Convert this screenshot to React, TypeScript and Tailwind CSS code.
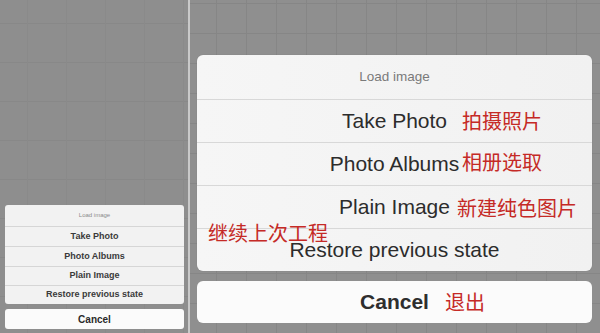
import React from "react";

const font = { fontFamily: '"Liberation Sans", Arial, sans-serif' };
const cjk = { fontFamily: '"Noto Sans CJK SC", "Noto Sans", sans-serif' };

function Note({ className, children }: { className: string; children: React.ReactNode }) {
  return (
    <span className={`absolute text-[20px] leading-[26px] text-[#c52a26] ${className}`} style={cjk}>
      {children}
    </span>
  );
}

export default function App() {
  const leftRows = ["Take Photo", "Photo Albums", "Plain Image", "Restore previous state"];
  const leftHeights = ["h-[20px]", "h-[20px]", "h-[19px]", "h-[19px]"];
  const rightRows = ["Take Photo", "Photo Albums", "Plain Image", "Restore previous state"];
  return (
    <div className="w-[600px] h-[333px] flex overflow-hidden bg-[#8e8e8e]" style={font}>
      {/* Left small screenshot */}
      <div className="w-[188px] h-full flex flex-col justify-end pl-[5px] pr-[4px] pb-[4px] bg-[#8e8e8e] bg-[linear-gradient(to_right,#8a8a8a_1px,transparent_1px),linear-gradient(to_bottom,#888888_1px,transparent_1px)] bg-[size:39px_39px] bg-[position:27px_23px]">
        <div className="rounded-[3px] bg-[#f2f2f2] overflow-hidden">
          <div className="h-[21px] flex items-center justify-center text-[6px] text-[#8a8a8a]">Load image</div>
          {leftRows.map((r, i) => (
            <div
              key={r}
              className={`${leftHeights[i]} border-t border-[#d6d6d6] flex items-center justify-center text-[9px] font-bold text-[#3a3a3a]`}
            >
              {r}
            </div>
          ))}
        </div>
        <div className="mt-[5px] h-[20px] rounded-[3px] bg-[#fbfbfb] flex items-center justify-center text-[10px] font-bold text-[#2a2a2a]">
          Cancel
        </div>
      </div>

      {/* Separator */}
      <div className="w-[2px] h-full bg-[#c9c9c9]" />

      {/* Right zoomed screenshot */}
      <div className="relative flex-1 h-full pl-[7px] pr-[8px] pt-[55px] bg-[#8f8f8f] bg-[linear-gradient(to_right,#868686_1px,transparent_1px),linear-gradient(to_bottom,#868686_1px,transparent_1px)] bg-[size:30px_30px] bg-[position:26px_3px]">
        <div className="rounded-[6px] bg-[linear-gradient(to_right,#f6f6f6,#f1f1f1)] overflow-hidden shadow-[0_0_1px_rgba(0,0,0,0.2)]">
          <div className="h-[44px] flex items-center justify-center text-[13.5px] text-[#7a7a7a]">Load image</div>
          {rightRows.map((r) => (
            <div
              key={r}
              className="h-[43px] border-t border-[#d8d8d8] flex items-center justify-center text-[21px] text-[#2c2c2c]"
            >
              {r}
            </div>
          ))}
        </div>
        <div className="mt-[10px] h-[42px] rounded-[6px] bg-[#fbfbfb] flex items-center justify-center text-[21px] font-bold text-[#2e2e2e]">
          Cancel
        </div>

        {/* Annotations laid over the screenshot */}
        <Note className="left-[272px] top-[108px]">拍摄照片</Note>
        <Note className="left-[272px] top-[149px]">相册选取</Note>
        <Note className="left-[267px] top-[195px]">新建纯色图片</Note>
        <Note className="left-[18px] top-[220px]">继续上次工程</Note>
        <Note className="left-[255px] top-[289px]">退出</Note>
      </div>
    </div>
  );
}
